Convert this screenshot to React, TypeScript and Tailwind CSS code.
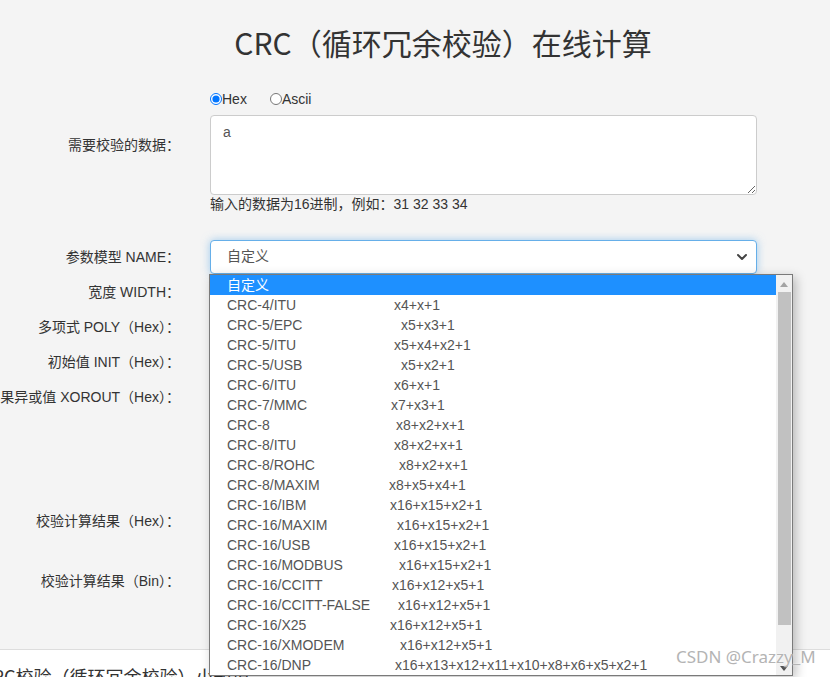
import { ChevronDown } from 'lucide-react';

type Model = { name: string; poly: string; x: number };

// x = left edge of the polynomial text in the open list (the original pads with &nbsp;)
const MODELS: Model[] = [
  { name: '自定义', poly: '', x: 0 },
  { name: 'CRC-4/ITU', poly: 'x4+x+1', x: 394 },
  { name: 'CRC-5/EPC', poly: 'x5+x3+1', x: 401 },
  { name: 'CRC-5/ITU', poly: 'x5+x4+x2+1', x: 394 },
  { name: 'CRC-5/USB', poly: 'x5+x2+1', x: 401 },
  { name: 'CRC-6/ITU', poly: 'x6+x+1', x: 394 },
  { name: 'CRC-7/MMC', poly: 'x7+x3+1', x: 391 },
  { name: 'CRC-8', poly: 'x8+x2+x+1', x: 396 },
  { name: 'CRC-8/ITU', poly: 'x8+x2+x+1', x: 394 },
  { name: 'CRC-8/ROHC', poly: 'x8+x2+x+1', x: 399 },
  { name: 'CRC-8/MAXIM', poly: 'x8+x5+x4+1', x: 389 },
  { name: 'CRC-16/IBM', poly: 'x16+x15+x2+1', x: 390 },
  { name: 'CRC-16/MAXIM', poly: 'x16+x15+x2+1', x: 397 },
  { name: 'CRC-16/USB', poly: 'x16+x15+x2+1', x: 394 },
  { name: 'CRC-16/MODBUS', poly: 'x16+x15+x2+1', x: 399 },
  { name: 'CRC-16/CCITT', poly: 'x16+x12+x5+1', x: 392 },
  { name: 'CRC-16/CCITT-FALSE', poly: 'x16+x12+x5+1', x: 398 },
  { name: 'CRC-16/X25', poly: 'x16+x12+x5+1', x: 390 },
  { name: 'CRC-16/XMODEM', poly: 'x16+x12+x5+1', x: 400 },
  { name: 'CRC-16/DNP', poly: 'x16+x13+x12+x11+x10+x8+x6+x5+x2+1', x: 395 },
];

const FONT = "font-['Liberation_Sans','Noto_Sans_CJK_SC',sans-serif]";

function Label({ children }: { children: string }) {
  return (
    <div className="flex w-[180px] shrink-0 justify-end whitespace-nowrap text-[14px] leading-5 text-[#333]">
      <span>{children}</span>
    </div>
  );
}

function FieldRow({ label, height, children }: { label: string; height: string; children?: React.ReactNode }) {
  return (
    <div className={`flex items-center gap-[30px] ${height}`}>
      <Label>{label}</Label>
      {children}
    </div>
  );
}

export default function App() {
  return (
    <div className={`relative h-[677px] w-[830px] overflow-hidden bg-[#f4f4f4] ${FONT}`}>
      {/* Title */}
      <h1 className="pl-[56px] pt-[20px] text-center font-['Noto_Sans_CJK_SC',sans-serif] text-[30px] font-normal leading-[44px] text-[#333]">
        CRC（循环冗余校验）在线计算
      </h1>

      {/* Data input */}
      <div className="mt-[26px] flex gap-[30px]">
        <div className="pt-[45px]">
          <Label>需要校验的数据：</Label>
        </div>
        <div className="flex w-[547px] flex-col">
          <div className="flex h-[18px] items-center text-[14px] text-[#333]">
            <label className="flex items-center">
              <input type="radio" name="fmt" defaultChecked className="m-0 h-[12px] w-[12px] accent-[#0075ff]" />
              <span>Hex</span>
            </label>
            <label className="ml-[23px] flex items-center">
              <input type="radio" name="fmt" className="m-0 h-[12px] w-[12px]" />
              <span>Ascii</span>
            </label>
          </div>
          <textarea
            defaultValue="a"
            className="mt-[7px] h-[80px] w-full rounded-[4px] border border-[#ccc] bg-white px-[12px] py-[6px] text-[14px] leading-5 text-[#555] outline-none"
          />
          <p className="h-[18px] text-[14px] leading-[18px] text-[#333]">输入的数据为16进制，例如：31 32 33 34</p>
        </div>
      </div>

      {/* Parameters */}
      <div className="mt-[26px] flex flex-col">
        <FieldRow label="参数模型 NAME：" height="h-[35px]">
          <div className="flex h-[34px] w-[547px] items-center justify-between rounded-[4px] border border-[#66afe9] bg-white pl-[16px] pr-[6px] text-[14px] text-[#555] shadow-[0_0_8px_rgba(102,175,233,0.6)]">
            <span>自定义</span>
            <ChevronDown className="h-4 w-4 text-[#444]" strokeWidth={3} />
          </div>
        </FieldRow>
        <FieldRow label="宽度 WIDTH：" height="h-[35px]" />
        <FieldRow label="多项式 POLY（Hex）：" height="h-[35px]" />
        <FieldRow label="初始值 INIT（Hex）：" height="h-[35px]" />
        <FieldRow label="结果异或值 XOROUT（Hex）：" height="h-[35px]" />
        <div className="h-[77px]" />
        <FieldRow label="校验计算结果（Hex）：" height="h-[60px]" />
        <FieldRow label="校验计算结果（Bin）：" height="h-[60px]" />
        <div className="h-[38px]" />
      </div>

      {/* Next section */}
      <div className="border-t border-[#ddd] bg-white pt-[14px]">
        <h2 className="-ml-[19px] whitespace-nowrap font-['Noto_Sans_CJK_SC',sans-serif] text-[18px] leading-6 text-[#333]">
          CRC校验（循环冗余校验）小知识
        </h2>
      </div>

      {/* Open select list */}
      <div className="absolute left-[209px] top-[274px] flex h-[402px] w-[584px] border border-[#7a7a7a] bg-white shadow-[3px_3px_10px_rgba(0,0,0,0.25)]">
        <ul className="flex-1 text-[14px] text-[#555]">
          {MODELS.map((m, i) => (
            <li
              key={m.name}
              className={`flex h-5 items-center whitespace-nowrap pl-[17px] ${i === 0 ? 'bg-[#1e90ff] text-white' : ''}`}
            >
              <span className="w-[162px] shrink-0">{m.name}</span>
              {m.poly && <span style={{ paddingLeft: m.x - 389 }}>{m.poly}</span>}
            </li>
          ))}
        </ul>
        <div className="flex w-[16px] flex-col items-center bg-[#f1f1f1]">
          <svg width="8" height="5" viewBox="0 0 8 5" className="mt-[7px]">
            <path d="M4 0 L8 5 L0 5 Z" fill="#a3a3a3" />
          </svg>
          <div className="mt-[5px] h-[333px] w-[13px] bg-[#c1c1c1]" />
          <svg width="8" height="5" viewBox="0 0 8 5" className="mt-auto mb-[4px]">
            <path d="M0 0 L8 0 L4 5 Z" fill="#505050" />
          </svg>
        </div>
      </div>

      {/* Watermark */}
      <div className="absolute left-[676px] top-[644px] font-['Noto_Sans',sans-serif] text-[17px] text-[#b4b4b4] [text-shadow:0_0_2px_#fff]">
        CSDN @Crazzy_M
      </div>
    </div>
  );
}
